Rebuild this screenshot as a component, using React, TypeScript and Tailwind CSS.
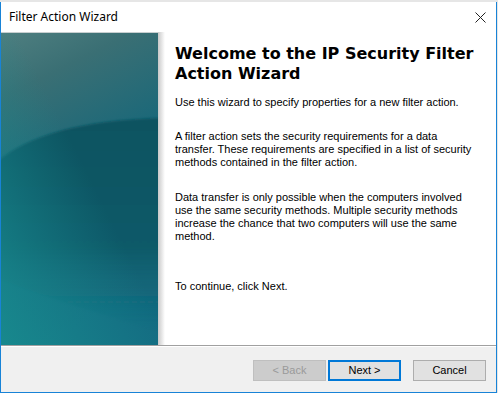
import React from 'react'

const body = { fontFamily: '"Liberation Sans", Arial, sans-serif' }

function Banner() {
  return (
    <svg width="157" height="313" viewBox="0 0 157 313" className="block">
      <defs>
        <linearGradient id="bg" x1="0" y1="0" x2="0.25" y2="1">
          <stop offset="0" stopColor="#4f7f80" />
          <stop offset="0.2" stopColor="#3a6f74" />
          <stop offset="0.55" stopColor="#15677a" />
          <stop offset="1" stopColor="#146c82" />
        </linearGradient>
        <linearGradient id="dark" x1="0" y1="0" x2="0" y2="1">
          <stop offset="0" stopColor="#0a5361" />
          <stop offset="0.6" stopColor="#0d5a68" />
          <stop offset="1" stopColor="#12667a" stopOpacity="0" />
        </linearGradient>
        <linearGradient id="glow" x1="0" y1="1" x2="0.55" y2="0.45">
          <stop offset="0" stopColor="#188a8e" stopOpacity="0.95" />
          <stop offset="1" stopColor="#188a8e" stopOpacity="0" />
        </linearGradient>
        <filter id="soft">
          <feGaussianBlur stdDeviation="1.2" />
        </filter>
      </defs>
      <rect width="157" height="313" fill="url(#bg)" />
      <path
        d="M-4 130 C 25 104 80 88 160 86 L160 300 C 110 285 50 268 -4 246 Z"
        fill="url(#dark)"
        filter="url(#soft)"
      />
      <rect width="157" height="313" fill="url(#glow)" />
      <rect width="157" height="1" fill="#c8cfd0" />
    </svg>
  )
}

function Btn({ children, kind }: { children: React.ReactNode; kind?: 'default' | 'disabled' }) {
  const cls =
    kind === 'disabled'
      ? 'bg-[#cccccc] border-[#bfbfbf] text-[#9a9a9a]'
      : kind === 'default'
        ? 'bg-[#e1e1e1] border-[#0078d7] text-black shadow-[inset_0_0_0_1px_#0078d7]'
        : 'bg-[#e1e1e1] border-[#adadad] text-black'
  return (
    <div
      className={`w-[73px] h-[21px] border flex items-center justify-center text-[11px] ${cls}`}
      style={body}
    >
      {children}
    </div>
  )
}

export default function App() {
  return (
    <div className="w-[498px] h-[393px] bg-[#e6e6e6] pt-[2px] overflow-hidden">
      <div className="w-[497px] h-[391px] bg-white border-x border-b border-[#1883d7] flex flex-col">
        {/* Title bar */}
        <div className="h-[30px] flex items-center justify-between pl-[8px] pr-[10px] shrink-0">
          <span className="text-[12px] text-black" style={{ fontFamily: '"Noto Sans", "Open Sans", sans-serif' }}>
            Filter Action Wizard
          </span>
          <svg width="11" height="11" viewBox="0 0 11 11">
            <path d="M0.5 0.5 L10.5 10.5 M10.5 0.5 L0.5 10.5" stroke="#222" strokeWidth="1" />
          </svg>
        </div>

        {/* Body */}
        <div className="flex h-[313px] shrink-0">
          <Banner />
          <div className="w-[7px] bg-gradient-to-r from-[#c9c9c9] to-white" />
          <div className="flex-1 pl-[10px] pt-[12px] text-black">
            <h1
              className="text-[16px] font-bold leading-[20px]"
              style={{ fontFamily: '"DejaVu Sans", Verdana, sans-serif' }}
            >
              Welcome to the IP Security Filter
              <br />
              Action Wizard
            </h1>
            <div className="text-[11px] leading-[13px]" style={body}>
              <p className="mt-[12px]">Use this wizard to specify properties for a new filter action.</p>
              <p className="mt-[21px]">
                A filter action sets the security requirements for a data
                <br />
                transfer. These requirements are specified in a list of security
                <br />
                methods contained in the filter action.
              </p>
              <p className="mt-[22px]">
                Data transfer is only possible when the computers involved
                <br />
                use the same security methods. Multiple security methods
                <br />
                increase the chance that two computers will use the same
                <br />
                method.
              </p>
              <p className="mt-[37px]">To continue, click Next.</p>
            </div>
          </div>
        </div>

        {/* Footer */}
        <div className="h-px bg-[#a0a0a0] shrink-0" />
        <div className="h-px bg-white shrink-0" />
        <div className="flex-1 bg-[#f0f0f0] flex items-start justify-end pt-[13px] pr-[10px]">
          <Btn kind="disabled">&lt; Back</Btn>
          <div className="w-[2px]" />
          <Btn kind="default">Next &gt;</Btn>
          <div className="w-[12px]" />
          <Btn>Cancel</Btn>
        </div>
      </div>
    </div>
  )
}
